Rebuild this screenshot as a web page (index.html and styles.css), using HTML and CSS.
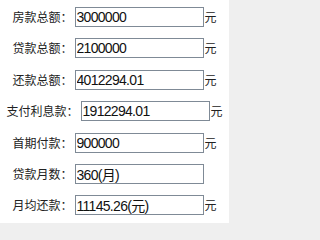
FILE: index.html
```html
<!DOCTYPE html>
<html lang="zh-CN">
<head>
<meta charset="utf-8">
<link rel="stylesheet" href="styles.css">
</head>
<body>
<div class="panel">
  <div class="row"><span class="label">房款总额：</span><input class="field" type="text" value="3000000"><span class="unit">元</span></div>
  <div class="row"><span class="label">贷款总额：</span><input class="field" type="text" value="2100000"><span class="unit">元</span></div>
  <div class="row"><span class="label">还款总额：</span><input class="field" type="text" value="4012294.01"><span class="unit">元</span></div>
  <div class="row"><span class="label">支付利息款：</span><input class="field" type="text" value="1912294.01"><span class="unit">元</span></div>
  <div class="row"><span class="label">首期付款：</span><input class="field" type="text" value="900000"><span class="unit">元</span></div>
  <div class="row"><span class="label">贷款月数：</span><input class="field" type="text" value="360(月)"><span class="unit hidden">元</span></div>
  <div class="row"><span class="label">月均还款：</span><input class="field" type="text" value="11145.26(元)"><span class="unit">元</span></div>
</div>
</body>
</html>
```
FILE: styles.css
```css
html, body {
  margin: 0;
  padding: 0;
  background: #efefef;
}
.panel {
  width: 229px;
  height: 223px;
  background: #ffffff;
  box-sizing: border-box;
  padding-top: 7px;
  display: flex;
  flex-direction: column;
  gap: 11.4px;
  font-family: "Noto Sans CJK SC", "Liberation Sans", sans-serif;
  color: #222222;
}
.row {
  display: flex;
  justify-content: center;
  align-items: center;
  height: 20px;
}
.label {
  font-size: 12px;
  line-height: 20px;
  margin-right: 2px;
  white-space: nowrap;
}
.field {
  width: 129px;
  height: 20px;
  box-sizing: border-box;
  margin: 0;
  padding: 0 0 0 1px;
  border: 1px solid #7f8a96;
  border-radius: 0;
  background: #ffffff;
  font-family: "Liberation Sans", "Noto Sans CJK SC", sans-serif;
  font-size: 14px;
  letter-spacing: -0.7px;
  color: #111111;
  outline: none;
}
.unit {
  font-size: 12px;
  line-height: 20px;
  width: 13px;
  padding-left: 1px;
  box-sizing: border-box;
}
.hidden {
  visibility: hidden;
}
```
